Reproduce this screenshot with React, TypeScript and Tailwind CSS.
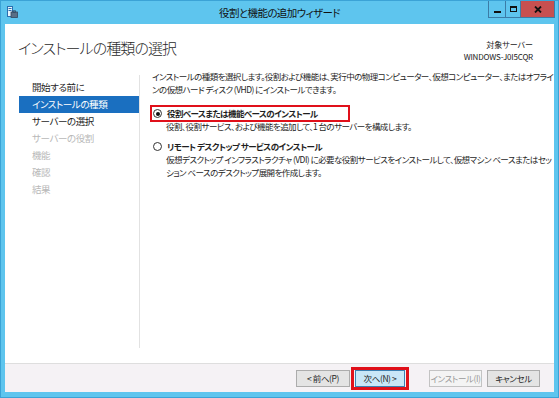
import React from "react";

const jp = "[font-family:'Noto_Sans_CJK_JP','Noto_Sans',sans-serif] [font-feature-settings:'palt']";

function Radio({ checked }: { checked?: boolean }) {
  return (
    <span className="w-[9px] h-[9px] rounded-full border border-[#333] bg-white flex items-center justify-center shrink-0">
      {checked && <span className="w-[4px] h-[4px] rounded-full bg-[#111]" />}
    </span>
  );
}

function NavItem({ label, state }: { label: string; state: "normal" | "active" | "disabled" }) {
  const cls =
    state === "active"
      ? "bg-[#1a6fc0] text-white"
      : state === "disabled"
      ? "text-[#b8b8b8]"
      : "text-[#1e1e1e]";
  return (
    <div className={`h-[17px] flex items-center pl-[13px] text-[9.5px] tracking-[-0.4px] whitespace-nowrap ${cls}`}>{label}</div>
  );
}

export default function App() {
  return (
    <div className={`w-[559px] h-[398px] bg-[#5ec5ee] border border-[#3ba3d6] flex flex-col ${jp}`}>
      {/* Title bar */}
      <div className="h-[23px] grid grid-cols-[1fr_auto_1fr] items-start">
        <div className="pl-[6px] pt-[5px]">
          <svg width="11" height="12" viewBox="0 0 11 12">
            <rect x="0.5" y="0.5" width="5" height="10" fill="#e8f4fb" stroke="#2a6fb0" />
            <rect x="1.5" y="2" width="3" height="1" fill="#2a6fb0" />
            <rect x="1.5" y="4" width="3" height="1" fill="#2a6fb0" />
            <rect x="4" y="6" width="6.5" height="5.5" fill="#5a6f85" stroke="#33475c" strokeWidth="0.8" />
            <rect x="6" y="4.8" width="2.5" height="1.4" fill="none" stroke="#33475c" strokeWidth="0.8" />
          </svg>
        </div>
        <div className="pt-[4px] text-[10.5px] leading-[15px] text-[#111] tracking-[-0.6px] whitespace-nowrap">役割と機能の追加ウィザード</div>
        <div className="flex justify-end pr-[3px]">
          <div className="flex h-[17px] border border-t-0 border-[#3b7ca6]">
            <div className="w-[17px] flex items-end justify-center pb-[4px] border-r border-[#3b7ca6]">
              <span className="w-[7px] h-[2px] bg-[#111]" />
            </div>
            <div className="w-[15px] flex items-center justify-center border-r border-[#3b7ca6]">
              <span className="w-[7px] h-[6px] border border-t-2 border-[#111]" />
            </div>
            <div className="w-[33px] bg-[#c75050] flex items-center justify-center">
              <svg width="8" height="7" viewBox="0 0 8 7">
                <path d="M1 0.5 L7 6.5 M7 0.5 L1 6.5" stroke="#111" strokeWidth="1.8" />
              </svg>
            </div>
          </div>
        </div>
      </div>

      {/* Client area */}
      <div className="flex-1 mx-[4px] bg-white flex flex-col min-h-0">
        {/* Header */}
        <div className="h-[44px] flex justify-between">
          <div className="pt-[14px] pl-[13px] text-[15px] leading-[20px] text-[#2a2a2a] tracking-[-0.9px] font-light whitespace-nowrap">
            インストールの種類の選択
          </div>
          <div className="pt-[15px] pr-[21px] text-right text-[8px] leading-[12px] text-[#222]">
            <div>対象サーバー</div>
            <div className="tracking-[-0.2px]">WINDOWS-J0I5CQR</div>
          </div>
        </div>

        {/* Body */}
        <div className="flex-1 flex min-h-0">
          <div className="w-[134px] shrink-0 pl-[14px] pt-[11px]">
            <NavItem label="開始する前に" state="normal" />
            <NavItem label="インストールの種類" state="active" />
            <NavItem label="サーバーの選択" state="normal" />
            <NavItem label="サーバーの役割" state="disabled" />
            <NavItem label="機能" state="disabled" />
            <NavItem label="確認" state="disabled" />
            <NavItem label="結果" state="disabled" />
          </div>
          <div className="w-px shrink-0 bg-[#e2e2e2] mt-[7px] mb-[15px]" />
          <div className="flex-1 min-w-0 pl-[12px] pt-[2px] text-[8.5px] leading-[13px] text-[#1e1e1e] tracking-[-0.55px] whitespace-nowrap">
            <div>インストールの種類を選択します。役割および機能は、実行中の物理コンピューター、仮想コンピューター、またはオフライ</div>
            <div>ンの仮想ハード ディスク (VHD) にインストールできます。</div>

            <div className="mt-[11px] relative">
              <div className="absolute left-[-2px] top-[-2px] w-[200px] h-[17px] border-[2px] border-[#e0101a]" />
              <div className="flex items-center gap-[5px] pl-[1px]">
                <Radio checked />
                <span className="font-bold">役割ベースまたは機能ベースのインストール</span>
              </div>
            </div>
            <div className="pl-[14px]">役割、役割サービス、および機能を追加して、1 台のサーバーを構成します。</div>

            <div className="mt-[7px] flex items-center gap-[5px] pl-[1px]">
              <Radio />
              <span className="font-bold">リモート デスクトップ サービスのインストール</span>
            </div>
            <div className="pl-[14px]">仮想デスクトップ インフラストラクチャ (VDI) に必要な役割サービスをインストールして、仮想マシン ベースまたはセッ</div>
            <div className="pl-[14px]">ション ベースのデスクトップ展開を作成します。</div>
          </div>
        </div>

        {/* Footer */}
        <div className="h-[29px] shrink-0 border-t border-[#dedede] bg-[#f5f2f5] flex items-center justify-end pr-[14px] text-[8.5px] tracking-[-0.4px] whitespace-nowrap">
          <div className="w-[54px] h-[17px] border border-[#acacac] bg-[#e4e4e4] flex items-center justify-center text-[#1e1e1e]">&lt; 前へ(P)</div>
          <div className="ml-[5px] relative">
            <div className="absolute left-[-4px] top-[-3px] w-[58px] h-[23px] border-[3px] border-[#e0101a]" />
            <div className="w-[50px] h-[17px] border border-[#3c7fb1] bg-[#c9e6f7] flex items-center justify-center text-[#1e1e1e]">次へ(N) &gt;</div>
          </div>
          <div className="ml-[24px] w-[53px] h-[17px] border border-[#c3c3c3] bg-[#f4f4f4] flex items-center justify-center text-[#9a9a9a]">インストール(I)</div>
          <div className="ml-[5px] w-[53px] h-[17px] border border-[#acacac] bg-[#e4e4e4] flex items-center justify-center text-[#1e1e1e]">キャンセル</div>
        </div>
      </div>
      <div className="h-[5px] shrink-0" />
    </div>
  );
}
